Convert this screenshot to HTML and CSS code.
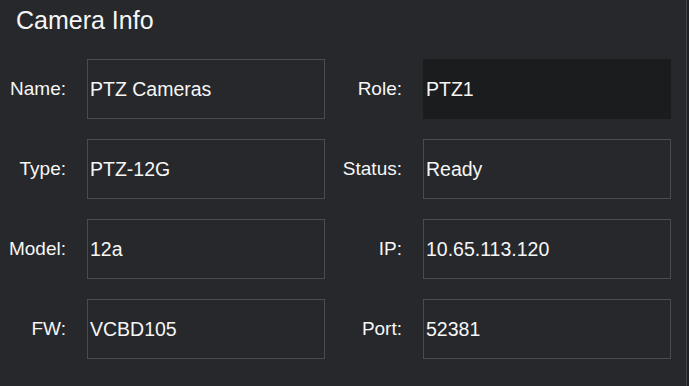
FILE: index.html
```html
<!DOCTYPE html>
<html lang="en">
<head>
    <meta charset="UTF-8">
    <meta name="viewport" content="width=device-width, initial-scale=1.0">
    <title>Camera Info</title>
    <link rel="stylesheet" href="styles.css">
</head>
<body>
    <div class="info-panel">
        <h1 class="panel-title">Camera Info</h1>

        <div class="info-grid">
            <label class="field-label">Name:</label>
            <div class="field-box">PTZ Cameras</div>
            <label class="field-label">Role:</label>
            <div class="field-box filled">PTZ1</div>

            <label class="field-label">Type:</label>
            <div class="field-box">PTZ-12G</div>
            <label class="field-label">Status:</label>
            <div class="field-box">Ready</div>

            <label class="field-label">Model:</label>
            <div class="field-box">12a</div>
            <label class="field-label">IP:</label>
            <div class="field-box">10.65.113.120</div>

            <label class="field-label">FW:</label>
            <div class="field-box">VCBD105</div>
            <label class="field-label">Port:</label>
            <div class="field-box">52381</div>
        </div>
    </div>
</body>
</html>
```

FILE: styles.css
```css
/* Page base */
body {
    margin: 0;
    background-color: #1f2024;
    font-family: "Liberation Sans", Arial, sans-serif;
    color: #f6f6f6;
}

/* Panel fills the window */
.info-panel {
    width: 687px;
    height: 386px;
    background-color: #26282c;
    border-right: 1px solid #44464a;
    box-sizing: border-box;
    padding-top: 5px;
}

.panel-title {
    margin: 0 0 24px 0;
    padding-left: 16px;
    font-size: 25px;
    font-weight: normal;
    line-height: 30px;
}

/* Two columns of label + value */
.info-grid {
    display: grid;
    grid-template-columns: 87px 238px 98px 248px;
    grid-auto-rows: 60px;
    row-gap: 20px;
}

.field-label {
    display: flex;
    align-items: center;
    justify-content: flex-end;
    padding-right: 21px;
    font-size: 19px;
}

.field-box {
    display: flex;
    align-items: center;
    padding-left: 2px;
    border: 1px solid #4a4c50;
    font-size: 19.5px;
    overflow: hidden;
}

.field-box.filled {
    background-color: #1b1c1e;
    border-color: #1b1c1e;
}
```
